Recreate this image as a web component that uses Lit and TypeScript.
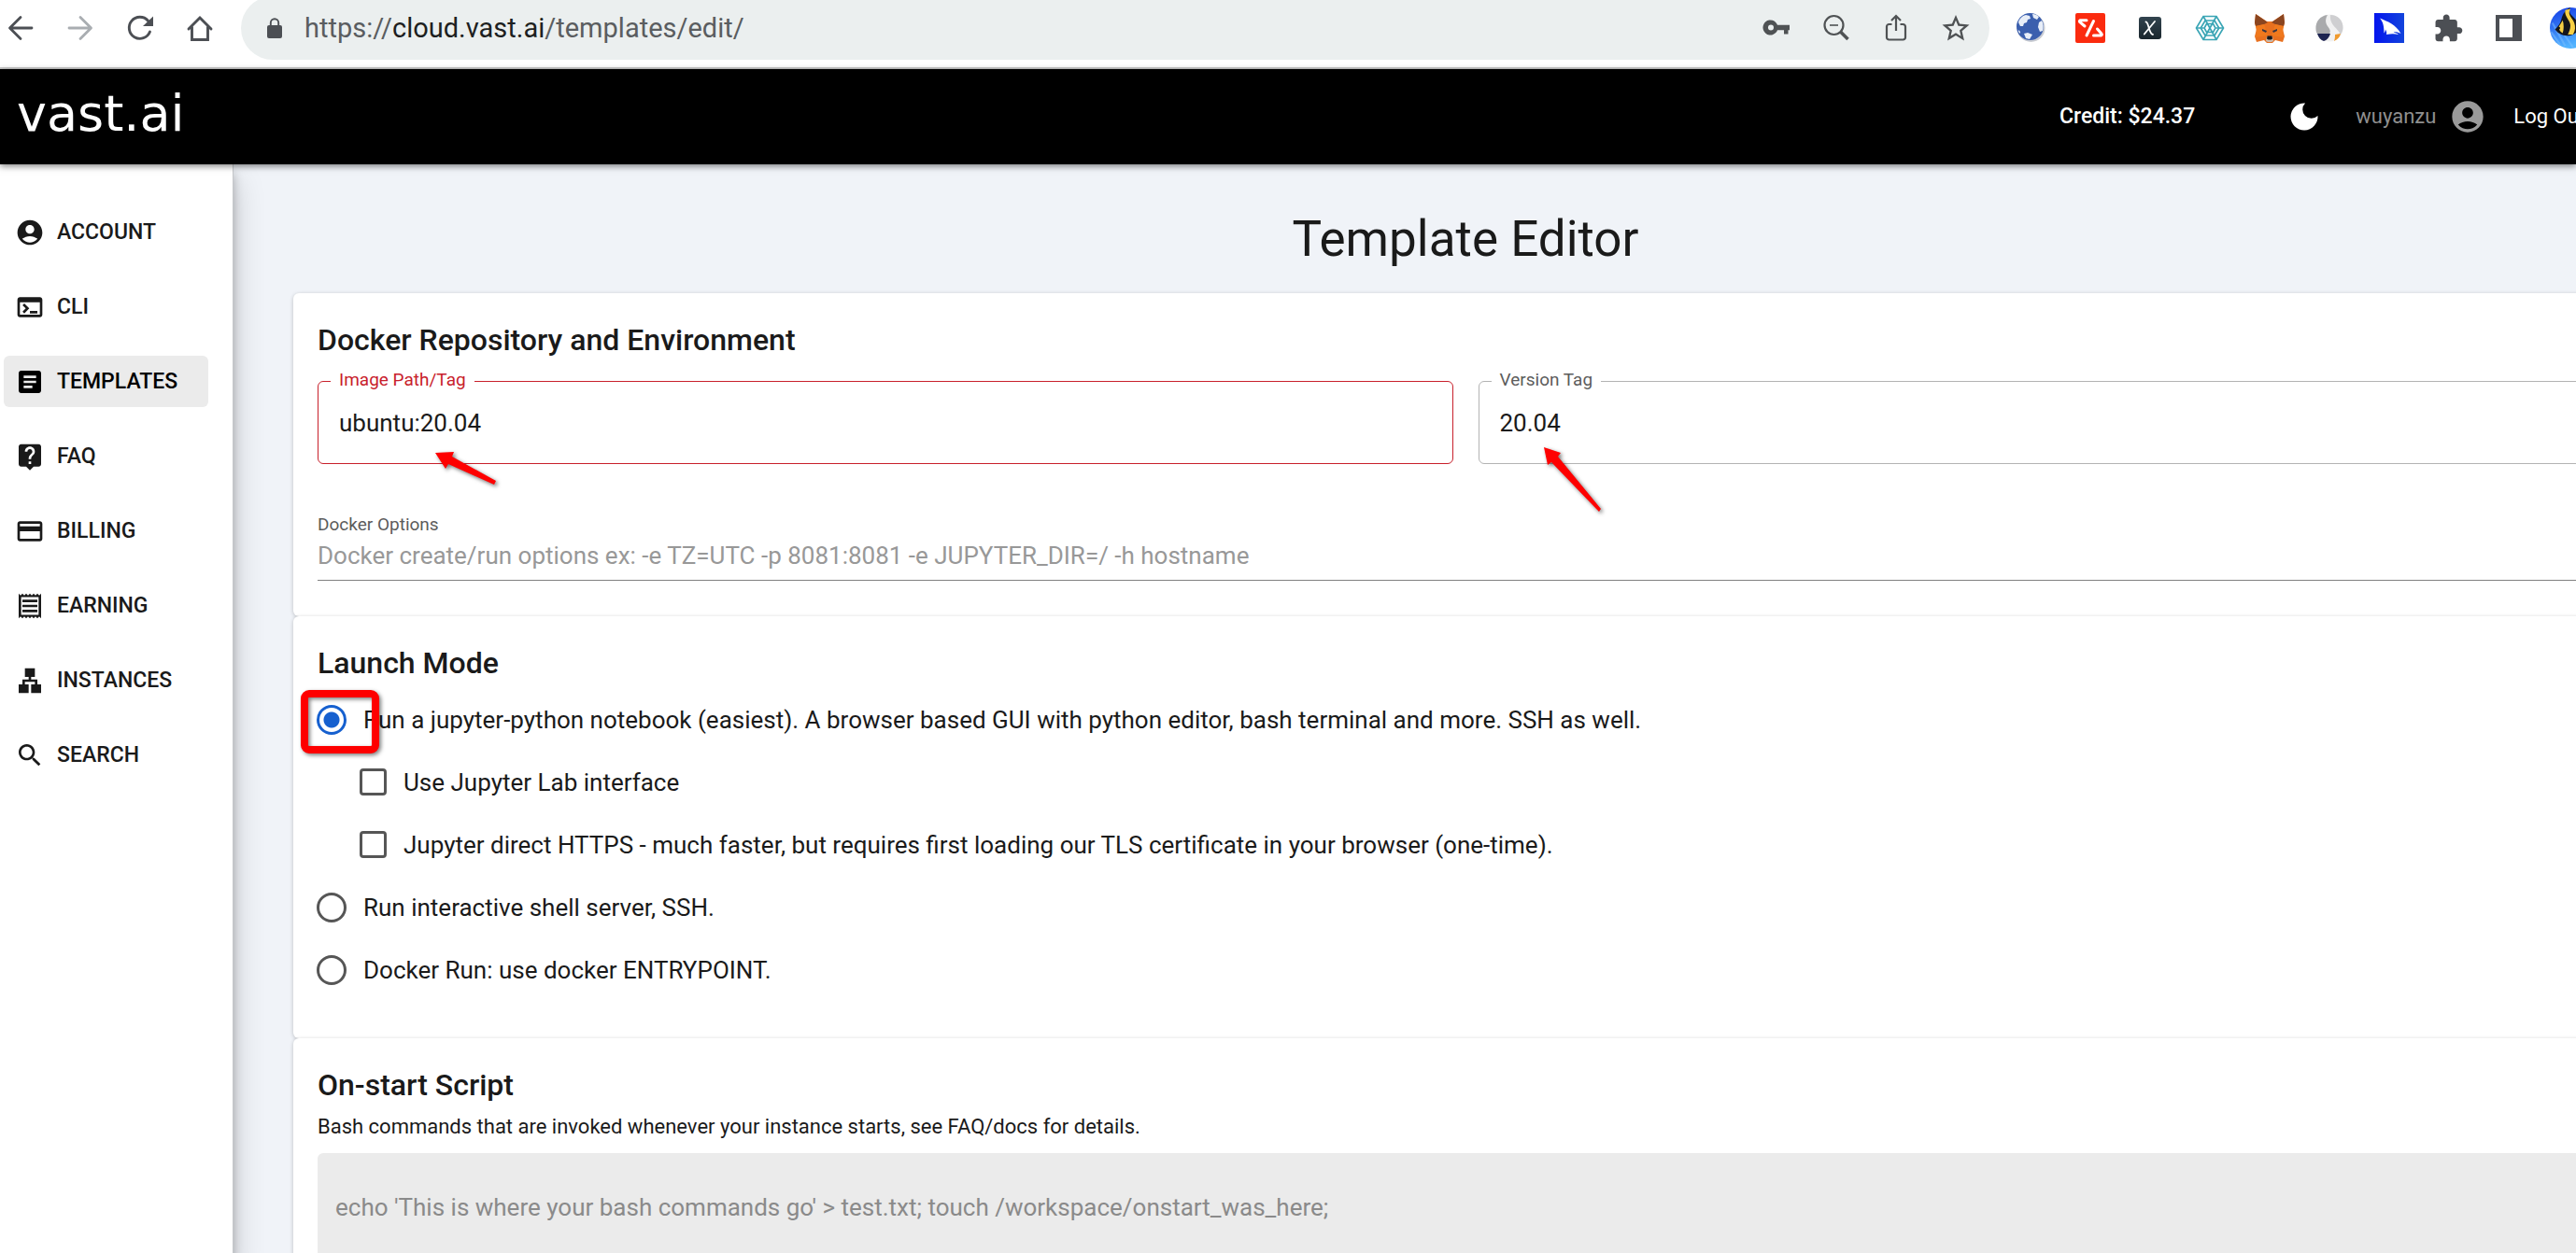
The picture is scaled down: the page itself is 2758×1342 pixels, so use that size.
import { LitElement, html, svg, css, nothing, type SVGTemplateResult } from "lit";
import { customElement, property, state } from "lit/decorators.js";

/* ---------- Icon set ---------- */

const ICONS: Record<string, SVGTemplateResult> = {
  account: svg`<path d="M12 2C6.48 2 2 6.48 2 12s4.48 10 10 10 10-4.48 10-10S17.52 2 12 2zm0 4c1.93 0 3.5 1.57 3.5 3.5S13.93 13 12 13s-3.5-1.57-3.5-3.5S10.07 6 12 6zm0 14c-2.03 0-4.43-.82-6.14-2.88C7.55 15.8 9.68 15 12 15s4.45.8 6.14 2.12C16.43 19.18 14.03 20 12 20z"/>`,
  cli: svg`<path d="M20 4H4c-1.11 0-2 .9-2 2v12c0 1.1.89 2 2 2h16c1.1 0 2-.9 2-2V6c0-1.1-.89-2-2-2zm0 14H4V8h16v10zm-2-1h-6v-2h6v2zM7.5 17l-1.41-1.41L8.67 13l-2.59-2.59L7.5 9l4 4-4 4z"/>`,
  templates: svg`<path d="M19 3H5c-1.1 0-2 .9-2 2v14c0 1.1.9 2 2 2h14c1.1 0 2-.9 2-2V5c0-1.1-.9-2-2-2zm-5 14H7v-2h7v2zm3-4H7v-2h10v2zm0-4H7V7h10v2z"/>`,
  faq: svg`<path d="M19 2H5c-1.11 0-2 .9-2 2v14c0 1.1.89 2 2 2h4l3 3 3-3h4c1.1 0 2-.9 2-2V4c0-1.1-.9-2-2-2zm-6 16h-2v-2h2v2zm2.07-7.75l-.9.92C13.45 11.9 13 12.5 13 14h-2v-.5c0-1.1.45-2.1 1.17-2.83l1.24-1.26c.37-.36.59-.86.59-1.41 0-1.1-.9-2-2-2s-2 .9-2 2H8c0-2.21 1.79-4 4-4s4 1.79 4 4c0 .88-.36 1.68-.93 2.25z"/>`,
  billing: svg`<path d="M20 4H4c-1.11 0-1.99.89-1.99 2L2 18c0 1.11.89 2 2 2h16c1.11 0 2-.89 2-2V6c0-1.11-.89-2-2-2zm0 14H4v-6h16v6zm0-10H4V6h16v2z"/>`,
  earning: svg`<path d="M19.5 3.5L18 2l-1.5 1.5L15 2l-1.5 1.5L12 2l-1.5 1.5L9 2 7.5 3.5 6 2 4.5 3.5 3 2v20l1.5-1.5L6 22l1.5-1.5L9 22l1.5-1.5L12 22l1.5-1.5L15 22l1.5-1.5L18 22l1.5-1.5L21 22V2l-1.5 1.5zM19 19.09H5V4.91h14v14.18zM6 15h12v2H6zm0-4h12v2H6zm0-4h12v2H6z"/>`,
  instances: svg`<path d="M13 22h8v-7h-3v-4h-5V9h3V2H8v7h3v2H6v4H3v7h8v-7H8v-2h8v2h-3z"/>`,
  search: svg`<path d="M15.5 14h-.79l-.28-.27C15.41 12.59 16 11.11 16 9.5 16 5.91 13.09 3 9.5 3S3 5.91 3 9.5 5.91 16 9.5 16c1.61 0 3.09-.59 4.23-1.57l.27.28v.79l5 4.99L20.49 19l-4.99-5zm-6 0C7.01 14 5 11.99 5 9.5S7.01 5 9.5 5 14 7.01 14 9.5 11.99 14 9.5 14z"/>`,
  moon: svg`<path d="M12.8 1.1A10.9 10.9 0 1 0 22.9 11.3 A7.1 7.1 0 0 1 12.8 1.1z"/>`,
};

/* Toolbar glyphs share a 32-unit grid. */
const TOOLBAR: Record<string, SVGTemplateResult> = {
  back: svg`<path d="M28 16H5M16 4.5L4.5 16 16 27.5" fill="none" stroke="#4c4f54" stroke-width="2.8" stroke-linecap="round" stroke-linejoin="round"/>`,
  forward: svg`<path d="M4 16h23M16 4.5L27.5 16 16 27.5" fill="none" stroke="#a9adb1" stroke-width="2.8" stroke-linecap="round" stroke-linejoin="round"/>`,
  reload: svg`<path d="M26.5 20A11.5 11.5 0 1 1 24.5 8.3" fill="none" stroke="#4c4f54" stroke-width="2.9" stroke-linecap="round"/><path d="M30 3.5V14H19z" fill="#4c4f54"/>`,
  home: svg`<path d="M4 17L16 5l12 12M7.5 15v13.5h17V15" fill="none" stroke="#4c4f54" stroke-width="2.9" stroke-linecap="round" stroke-linejoin="miter"/>`,
  lock: svg`<rect x="8" y="13" width="16" height="14" rx="2" fill="#4c4f54"/><path d="M11.8 14v-3.5a4.2 4.2 0 0 1 8.4 0V14" fill="none" stroke="#4c4f54" stroke-width="1.9"/>`,
  key: svg`<path fill="#4f5254" fill-rule="evenodd" d="M17 12.8A8 8 0 1 0 17 18.2H24V22.5h4.5v-4.3H30v-5.4zM10 12.5a3 3 0 1 1 0 6 3 3 0 0 1 0-6z"/>`,
  zoom: svg`<g fill="none" stroke="#4f5254"><circle cx="13.5" cy="13" r="10" stroke-width="2.2"/><path d="M9 13h9" stroke-width="1.6"/><path d="M20.5 20l8 8" stroke-width="3.6"/></g>`,
  share: svg`<path d="M11.5 12H8.5A2.5 2.5 0 0 0 6 14.5V26a2.5 2.5 0 0 0 2.5 2.5h15A2.5 2.5 0 0 0 26 26V14.5a2.5 2.5 0 0 0-2.5-2.5h-3M16 19V3.5M11 8l5-5 5 5" fill="none" stroke="#4f5254" stroke-width="2.2"/>`,
  star: svg`<path transform="translate(-1.4 -1) scale(1.45)" fill="#4f5254" d="M22 9.24l-7.19-.62L12 2 9.19 8.63 2 9.24l5.46 4.73L5.82 21 12 17.27 18.18 21l-1.63-7.03L22 9.24zM12 15.4l-3.76 2.27 1-4.28-3.32-2.88 4.38-.38L12 6.1l1.71 4.04 4.38.38-3.32 2.88 1 4.28L12 15.4z"/>`,
  globe: svg`<circle cx="16.5" cy="16" r="15" fill="#c9ccd2"/><circle cx="15.5" cy="14.5" r="14.5" fill="#3b5fae"/>
    <path d="M3 10c1-4 4-7 8-8l4 1 1 3-3 1-1 3-3 1-1 3-3 0zM18 1c3 0 5 1 7 3l-2 3-4-2zM25 10l3-2c2 3 2 8 1 11l-3 1-2-5zM9 22l4-1 5 2-3 5-4-1zM3 18l2 2v2l-2-2z" fill="#e8eef8"/>`,
  vector: svg`<rect width="32" height="32" rx="2" fill="#fb2b0f"/>
    <path d="M12 7.8H5.5a1 1 0 0 0-1 1.5l5.500 4.700M19.5 8.5l-7.5 15.5M19.5 24h8a1 1 0 0 0 .6-1.7L23.500 17" fill="none" stroke="#fff" stroke-width="3" stroke-linecap="round" stroke-linejoin="round"/>`,
  cross: svg`<defs><linearGradient id="slate" x1="0" y1="0" x2="0" y2="1"><stop offset="0" stop-color="#32444f"/><stop offset="1" stop-color="#1a262d"/></linearGradient></defs>
    <rect x="4" y="4" width="24" height="24" rx="3" fill="url(#slate)"/><path d="M11.5 9.5c3-.5 3 13 7.5 13.5M21 9L9.8 22.5" fill="none" stroke="#fff" stroke-width="1.8" stroke-linecap="round"/>`,
  web: svg`<g fill="none" stroke="#3aa5b5" stroke-width="1.7"><path d="M9 3.5h14L30.5 16 23 28.5H9L1.5 16z"/><path d="M11 8h10l4.8 8-4.8 8H11l-4.8-8z"/><path d="M12.5 11.5h7L22 16l-2.5 4.5h-7L10 16z"/><path d="M9 3.5l14 25M23 3.5L9 28.5M1.5 16h8M22.5 16h8"/></g>`,
  fox: svg`<path d="M1 1l12 8h6L31 1l1 10-2 6 2 8-2 6-8-2-3 3h-6l-3-3-8 2-2-6 2-8-2-6z" fill="#e8701f"/>
    <path d="M1 1l13 9-4 2-9 2-1-4zM31 1L18 10l4 2 9 2 1-4z" fill="#8a4520"/><path d="M1 14l9-2 4 12-13 2 1-6zM31 14l-9-2-4 12 13 2-1-6z" fill="#f0791d"/>
    <path d="M8 17l5 2-1 2-4-2zM24 17l-5 2 1 2 4-2z" fill="#3a3542"/><path d="M13 25h6l1 5-2 1h-4l-2-1z" fill="#c9b8ab"/><path d="M13.5 24.5h5l.5 3-1.5 1h-3l-1.5-1z" fill="#16181c"/>`,
  swirl: svg`<circle cx="16" cy="16" r="14.5" fill="#f1f1f1"/><path d="M14 2C6 3 1 9 1.5 17c.1 2 .5 4 1.5 5h13c2-3 0-5-2-8s-3-7 0-12z" fill="#a9aaac"/><path d="M17 2c8 0 14 6 13.5 14-.2 3-1 5-3 7-1-6-12-10-10.5-21z" fill="#cfcfd1"/><path d="M3 22h14c-1 4-4 7-7 8-3-1-6-4-7-8z" fill="#1d2450"/><path d="M28 22c-1 4-3 6-7 8 1-3 1-5 1-7z" fill="#f09a2d"/>`,
  bird: svg`<defs><linearGradient id="royal"><stop offset="0" stop-color="#0415ee"/><stop offset="1" stop-color="#1344dc"/></linearGradient></defs>
    <rect width="32" height="32" fill="url(#royal)"/><path d="M6 5.5C14 9 23 12 28.5 22c-3-1.5-5-2-8-1.5 2 .5 4 1 5.5 2.500-4-1-8-1-13 0 .5-2 .3-3-1-5.5-.3 2-.7 3-1.5 4C10.5 14 9.5 9.5 6 5.5z" fill="#fff"/>`,
  puzzle: svg`<path transform="translate(-1.2 .2) scale(1.37)" fill="#4c4f54" d="M20.5 11H19V7c0-1.1-.9-2-2-2h-4V3.5C13 2.12 11.88 1 10.5 1S8 2.12 8 3.5V5H4c-1.1 0-1.99.9-1.99 2v3.8H3.5c1.49 0 2.7 1.21 2.7 2.7s-1.21 2.7-2.7 2.7H2V20c0 1.1.9 2 2 2h3.8v-1.5c0-1.49 1.21-2.7 2.7-2.7 1.49 0 2.7 1.21 2.7 2.7V22H17c1.1 0 2-.9 2-2v-4h1.5c1.38 0 2.5-1.12 2.5-2.5S21.88 11 20.5 11z"/>`,
  panel: svg`<path fill="#4c4f54" fill-rule="evenodd" d="M2 2h28v28H2zM6 6v20h14V6z"/>`,
  fish: svg`<defs><linearGradient id="sea" x1="0" y1="0" x2=".3" y2="1"><stop offset="0" stop-color="#1239e6"/><stop offset="1" stop-color="#52b4ff"/></linearGradient></defs>
    <circle cx="16" cy="16" r="16" fill="url(#sea)"/><path d="M2 12l10 18M1 19l7 10M9 18l9 13" stroke="#7cc0ff" stroke-width="1.5" opacity=".5"/>
    <path d="M4 17c2-2 4-4 5-8 1-4 3-7 7-9-1 2-1 3 0 5 3 3 6 6 7 9 0 4-3 7-8 8-4 0-8-1-11-5z" fill="#14151b"/>
    <path d="M12 2c-1 5 4 8 4 12 0 3-1 5-2 7h4c2-3 2-6 1-9-1-4-6-6-3-11z" fill="#f7cf45"/><path d="M7 15c1-2 2-3 3-5 1 3 1 7 0 10-2-1-3-3-3-5z" fill="#f7cf45"/><circle cx="7" cy="16" r="1" fill="#14151b"/>`,
};

@customElement("app-icon")
class AppIcon extends LitElement {
  @property() name = "";

  static styles = css`
    :host { display: inline-flex; flex: none; width: 32px; height: 32px; }
    .art { display: block; width: 100%; height: 100%; fill: currentColor; }
  `;

  render() {
    const toolbar = TOOLBAR[this.name];
    return html`<svg class="art" viewBox=${toolbar ? "0 0 32 32" : "0 0 24 24"} aria-hidden="true">${toolbar ?? ICONS[this.name]}</svg>`;
  }
}

/* ---------- Browser toolbar ---------- */

@customElement("browser-bar")
class BrowserBar extends LitElement {
  static styles = css`
    :host { display: block; font-family: Roboto, "Noto Sans", sans-serif; }
    .bar { box-sizing: border-box; height: 74px; padding: 0 0 12px 6px; display: flex; align-items: center; background: #fff; border-bottom: 2px solid #cbcbcb; }
    .group { display: flex; align-items: center; gap: 32px; }
    button { display: flex; padding: 0; border: 0; background: none; cursor: pointer; }
    .address { flex: 1; min-width: 0; box-sizing: border-box; height: 68px; margin: 0 28px; padding: 0 20px; border-radius: 34px; background: #ebefef; display: flex; align-items: center; gap: 16px; }
    .url { flex: 1; min-width: 0; font-size: 29px; line-height: 36px; color: #5a5d60; white-space: nowrap; }
    .host { color: #1d1f21; }
    .extensions { margin-right: -16px; }
    .profile { margin-left: -4px; }
    .portrait { width: 44px; height: 44px; }
  `;

  private tool(name: string, label: string) {
    return html`<button type="button" aria-label=${label}><app-icon name=${name}></app-icon></button>`;
  }

  render() {
    return html`
      <div class="bar">
        <div class="group">
          ${this.tool("back", "Back")}${this.tool("forward", "Forward")}${this.tool("reload", "Reload")}${this.tool("home", "Home")}
        </div>
        <div class="address">
          <app-icon name="lock"></app-icon>
          <div class="url">https://<span class="host">cloud.vast.ai</span>/templates/edit/</div>
          <div class="group">
            ${this.tool("key", "Passwords")}${this.tool("zoom", "Zoom")}${this.tool("share", "Share")}${this.tool("star", "Bookmark")}
          </div>
        </div>
        <div class="group extensions">
          ${["globe", "vector", "cross", "web", "fox", "swirl", "bird"].map((n) => this.tool(n, `Extension ${n}`))}
          ${this.tool("puzzle", "Extensions")}${this.tool("panel", "Side panel")}
          <button type="button" class="profile" aria-label="Profile"><app-icon class="portrait" name="fish"></app-icon></button>
        </div>
      </div>
    `;
  }
}

/* ---------- Site header ---------- */

@customElement("site-header")
class SiteHeader extends LitElement {
  static styles = css`
    :host { display: block; position: relative; z-index: 2; font-family: Roboto, "Noto Sans", sans-serif; box-shadow: 0 2px 7px rgba(0, 0, 0, 0.5); }
    .header { box-sizing: border-box; height: 102px; padding-left: 18px; display: flex; align-items: center; justify-content: space-between; background: #000; color: #fff; }
    .logo { color: #fff; text-decoration: none; font-family: "DejaVu Sans", sans-serif; font-size: 54px; line-height: 60px; margin-bottom: 6px; }
    .actions { display: flex; align-items: center; margin-right: -10px; font-size: 22px; line-height: 28px; white-space: nowrap; }
    .credit { font-weight: 500; font-size: 23px; }
    .theme, .logout { display: flex; padding: 0; border: 0; background: none; color: #fff; font: inherit; cursor: pointer; }
    .theme { margin: 0 39px 0 101px; }
    .user { display: flex; align-items: center; gap: 14px; margin-right: 29px; color: #8f8f8f; text-decoration: none; }
    .face { width: 40px; height: 40px; color: #9a9a9a; }
  `;

  render() {
    return html`
      <header class="header">
        <a class="logo" href="#home">vast.ai</a>
        <div class="actions">
          <span class="credit">Credit: $24.37</span>
          <button class="theme" type="button" aria-label="Dark mode"><app-icon name="moon"></app-icon></button>
          <a class="user" href="#account">wuyanzu<app-icon class="face" name="account"></app-icon></a>
          <button class="logout" type="button">Log Out</button>
        </div>
      </header>
    `;
  }
}

/* ---------- Side navigation ---------- */

@customElement("side-nav")
class SideNav extends LitElement {
  @property() current = "";

  static styles = css`
    :host { display: block; flex: none; position: relative; z-index: 1; background: #fff; border-right: 1px solid #c6c8cb; font-family: Roboto, "Noto Sans", sans-serif;
      box-shadow: 0 10px 10px rgba(0, 0, 0, 0.25), 0 20px 30px 4px rgba(0, 0, 0, 0.14); }
    .list { box-sizing: border-box; width: 249px; margin: 0; padding: 45px 26px 0 4px; list-style: none; display: flex; flex-direction: column; gap: 25px; }
    .item { height: 55px; padding: 0 12px; border-radius: 6px; display: flex; align-items: center; gap: 13px; color: #1a1a1a; font-size: 23px; font-weight: 500; line-height: 29px; text-decoration: none; }
    .current { background: #ebebeb; color: #000; }
  `;

  render() {
    const items = ["account", "cli", "templates", "faq", "billing", "earning", "instances", "search"];
    return html`
      <nav>
        <ul class="list">
          ${items.map((id) => html`
            <li><a class="item ${id === this.current ? "current" : ""}" href="#${id}" aria-current=${id === this.current ? "page" : nothing}>
              <app-icon name=${id}></app-icon>${id.toUpperCase()}
            </a></li>`)}
        </ul>
      </nav>
    `;
  }
}

/* ---------- Template editor ---------- */

@customElement("template-editor")
class TemplateEditor extends LitElement {
  @state() private mode = "jupyter";

  static styles = css`
    :host { display: block; flex: 1; min-width: 0; font-family: Roboto, "Noto Sans", sans-serif; color: #1a1a1a; }
    .page { margin: 0 -66px 0 64px; padding-top: 48px; }
    .title { margin: 0 0 26px; text-align: center; font-size: 53px; font-weight: 400; line-height: 64px; }
    .card { padding: 24px 26px 38px; background: #fff; border-radius: 6px; box-shadow: 0 1px 4px rgba(0, 0, 0, 0.22); }
    .modes { padding-bottom: 40px; }
    .heading { margin: 0; font-size: 32px; font-weight: 500; line-height: 53px; }
    .pair { display: grid; grid-template-columns: 1fr 1fr; gap: 27px; margin: 17px 0 53px; }
    .field { position: relative; border: 1px solid #b3b3b3; border-radius: 6px; }
    .field-label { position: absolute; top: -14px; left: 13px; padding: 0 9px; background: #fff; color: #5c5c5c; font-size: 19px; line-height: 24px; }
    .invalid { border-color: #c8202b; }
    .invalid .field-label { color: #c8202b; }
    .input { display: block; box-sizing: border-box; width: 100%; margin: 0; border: 0; outline: 0; background: none; color: #1a1a1a; font: 26px/32px Roboto, "Noto Sans", sans-serif; }
    .field .input { height: 87px; padding: 0 22px; }
    .label { display: block; color: #5c5c5c; font-size: 19px; line-height: 24px; }
    .underlined { height: 48px; padding: 0 0 5px; border-bottom: 1px solid #808080; }
    .input::placeholder { color: #989898; opacity: 1; }
    .row { position: relative; height: 67px; display: flex; align-items: center; font-size: 26px; line-height: 32px; }
    .nested { padding-left: 45px; }
    .choice { display: flex; align-items: center; gap: 18px; cursor: pointer; }
    .box, .radio { appearance: none; box-sizing: border-box; flex: none; margin: 0; border: 3px solid #565656; background: #fff; }
    .radio { width: 32px; height: 32px; margin-left: -1px; border-radius: 50%; }
    .radio:checked { border-color: #1660cf; background: radial-gradient(circle, #1660cf 8px, #fff 9px); }
    .box { width: 29px; height: 29px; border-radius: 4px; }
    .note { margin: 2px 0 12px; font-size: 22px; line-height: 32px; }
    .script { height: 240px; resize: none; padding: 42px 19px; border-radius: 6px 6px 0 0; background: #ebebeb; }
    .script::placeholder { color: #8a8a8a; }
    .arrow { position: absolute; pointer-events: none; overflow: visible; fill: #fe0000; filter: drop-shadow(2px 2px 2px rgba(0, 0, 0, 0.55)); }
    .arrow-image { left: 125px; top: 75px; width: 66px; height: 35px; }
    .arrow-version { left: 69px; top: 70px; width: 62px; height: 70px; }
    .highlight { position: absolute; left: -18px; top: 2px; width: 68px; height: 52px; border: 8px solid #fe0000; border-radius: 9px; pointer-events: none; filter: drop-shadow(2px 2px 2px rgba(0, 0, 0, 0.5)); }
  `;

  private modeRow(value: string, text: string, marked = false) {
    return html`
      <div class="row">
        <label class="choice">
          <input class="radio" type="radio" name="mode" value=${value} .checked=${this.mode === value} @change=${() => (this.mode = value)} />
          ${text}
        </label>
        ${marked ? html`<div class="highlight"></div>` : nothing}
      </div>
    `;
  }

  private optionRow(text: string) {
    return html`<div class="row nested"><label class="choice"><input class="box" type="checkbox" />${text}</label></div>`;
  }

  render() {
    return html`
      <main class="page">
        <h1 class="title">Template Editor</h1>
        <section class="card">
          <h2 class="heading">Docker Repository and Environment</h2>
          <div class="pair">
            <div class="field invalid">
              <label class="field-label" for="image">Image Path/Tag</label>
              <input class="input" id="image" type="text" value="ubuntu:20.04" aria-invalid="true" />
              <svg class="arrow arrow-image" viewBox="0 0 66 35" aria-hidden="true"><path d="M0 1L20 0l-2 5 47 26-2 4-49-22-3 5z"/></svg>
            </div>
            <div class="field">
              <label class="field-label" for="version">Version Tag</label>
              <input class="input" id="version" type="text" value="20.04" />
              <svg class="arrow arrow-version" viewBox="0 0 62 70" aria-hidden="true"><path d="M0 0l18 6-3 4 46 56-2 3L8 16l-4 3z"/></svg>
            </div>
          </div>
          <label class="label" for="options">Docker Options</label>
          <input class="input underlined" id="options" type="text" placeholder="Docker create/run options ex: -e TZ=UTC -p 8081:8081 -e JUPYTER_DIR=/ -h hostname" />
        </section>
        <section class="card modes">
          <h2 class="heading">Launch Mode</h2>
          ${this.modeRow("jupyter", "Run a jupyter-python notebook (easiest). A browser based GUI with python editor, bash terminal and more. SSH as well.", true)}
          ${this.optionRow("Use Jupyter Lab interface")}
          ${this.optionRow("Jupyter direct HTTPS - much faster, but requires first loading our TLS certificate in your browser (one-time).")}
          ${this.modeRow("ssh", "Run interactive shell server, SSH.")}
          ${this.modeRow("docker", "Docker Run: use docker ENTRYPOINT.")}
        </section>
        <section class="card">
          <h2 class="heading">On-start Script</h2>
          <p class="note" id="script-note">Bash commands that are invoked whenever your instance starts, see FAQ/docs for details.</p>
          <textarea class="input script" aria-label="On-start Script" aria-describedby="script-note" placeholder="echo 'This is where your bash commands go' > test.txt; touch /workspace/onstart_was_here;"></textarea>
        </section>
      </main>
    `;
  }
}

/* ---------- Shell ---------- */

@customElement("app-root")
class AppRoot extends LitElement {
  static styles = css`
    :host { display: flex; flex-direction: column; height: 100vh; overflow: hidden; background: #f0f3f8; }
    .body { flex: 1; min-height: 0; display: flex; overflow: hidden; }
  `;

  render() {
    return html`
      <browser-bar></browser-bar>
      <site-header></site-header>
      <div class="body">
        <side-nav current="templates"></side-nav>
        <template-editor></template-editor>
      </div>
    `;
  }
}
